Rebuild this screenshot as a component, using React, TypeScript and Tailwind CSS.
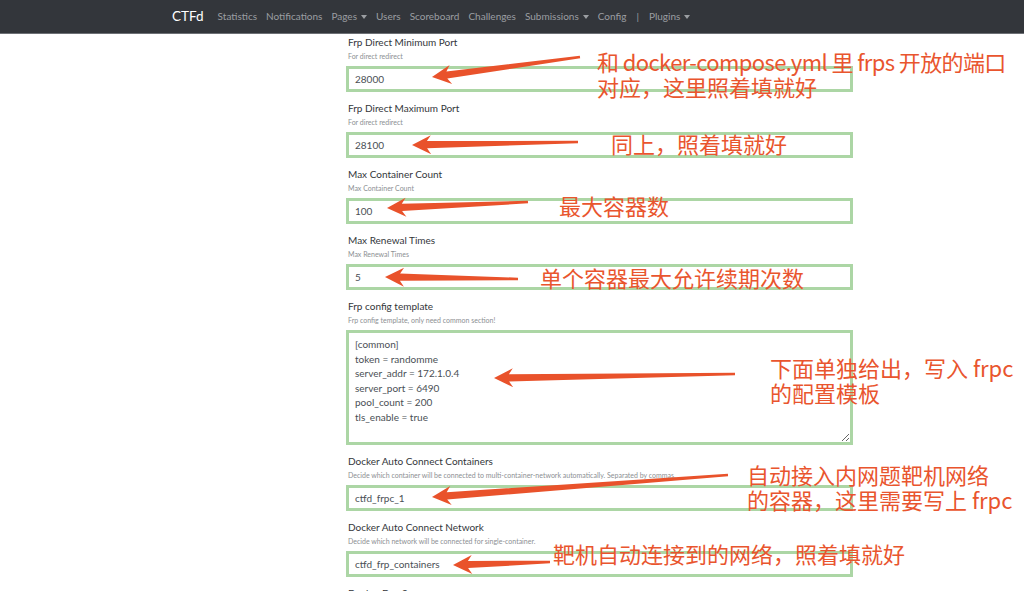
import { ReactNode } from 'react'

const navItems = [
  { label: 'Statistics' },
  { label: 'Notifications' },
  { label: 'Pages', caret: true },
  { label: 'Users' },
  { label: 'Scoreboard' },
  { label: 'Challenges' },
  { label: 'Submissions', caret: true },
  { label: 'Config' },
]

const fields = [
  { label: 'Frp Direct Minimum Port', help: 'For direct redirect', value: '28000' },
  { label: 'Frp Direct Maximum Port', help: 'For direct redirect', value: '28100' },
  { label: 'Max Container Count', help: 'Max Container Count', value: '100' },
  { label: 'Max Renewal Times', help: 'Max Renewal Times', value: '5' },
]

const template = `[common]
token = randomme
server_addr = 172.1.0.4
server_port = 6490
pool_count = 200
tls_enable = true

admin_addr = 172.1.0.3
admin_port = 7400`

const fields2 = [
  {
    label: 'Docker Auto Connect Containers',
    help: 'Decide which container will be connected to multi-container-network automatically. Separated by commas.',
    value: 'ctfd_frpc_1',
  },
  {
    label: 'Docker Auto Connect Network',
    help: 'Decide which network will be connected for single-container.',
    value: 'ctfd_frp_containers',
  },
  { label: 'Docker Dns Servers', help: 'Decide which dns will be used in container network.', value: '' },
]

// arrows: tail -> tip
const arrows: [number, number, number, number][] = [
  [580, 57, 432, 77],
  [578, 142, 412, 145],
  [528, 202, 387, 208],
  [518, 279, 385, 277],
  [735, 374, 494, 378],
  [728, 475, 432, 497],
  [550, 562, 453, 565],
]

const notes = [
  { x: 597, y: 49, lines: ['和 docker-compose.yml 里 frps 开放的端口', '对应，这里照着填就好'], tight: true },
  { x: 611, y: 131, lines: ['同上，照着填就好'] },
  { x: 559, y: 193, lines: ['最大容器数'] },
  { x: 540, y: 265, lines: ['单个容器最大允许续期次数'] },
  { x: 770, y: 355, lines: ['下面单独给出，写入 frpc', '的配置模板'] },
  { x: 747, y: 462, lines: ['自动接入内网题靶机网络', '的容器，这里需要写上 frpc'] },
  { x: 553, y: 541, lines: ['靶机自动连接到的网络，照着填就好'] },
]

function arrowPoints(tx: number, ty: number, hx: number, hy: number) {
  const len = Math.hypot(hx - tx, hy - ty)
  const dx = (hx - tx) / len
  const dy = (hy - ty) / len
  const nx = -dy
  const ny = dx
  const bx = hx - dx * 15
  const by = hy - dy * 15
  const wx = hx - dx * 19
  const wy = hy - dy * 19
  const pts = [
    [tx + nx * 1.3, ty + ny * 1.3],
    [bx + nx * 3.6, by + ny * 3.6],
    [wx + nx * 9.5, wy + ny * 9.5],
    [hx, hy],
    [wx - nx * 9.5, wy - ny * 9.5],
    [bx - nx * 3.6, by - ny * 3.6],
    [tx - nx * 1.3, ty - ny * 1.3],
  ]
  return pts.map((p) => p.map((v) => v.toFixed(1)).join(',')).join(' ')
}

function Caret() {
  return <span className="ml-[4px] inline-block border-x-[3px] border-t-[4px] border-x-transparent border-t-[#9b9ea2] align-middle" />
}

function Group({ label, help, children }: { label: string; help: string; children: ReactNode }) {
  return (
    <div className="mb-[9px]">
      <div className="h-[14px] pl-[2px] text-[10px] leading-[14px] text-[#33363a] whitespace-nowrap">{label}</div>
      <div className="mt-[2px] h-[10px] pl-[2px] text-[7px] leading-[10px] text-[#8c8f93] whitespace-nowrap">{help}</div>
      <div className="mt-[5px]">{children}</div>
    </div>
  )
}

export default function App() {
  return (
    <div className="relative h-screen overflow-hidden bg-white font-['Lato','Liberation_Sans',sans-serif]">
      {/* Navbar */}
      <nav className="h-[34px] bg-[#33363b] border-b border-[#6d7075] flex items-center pl-[172px]">
        <span className="text-[13.5px] text-white mr-[14px]">CTFd</span>
        <div className="flex items-center gap-[9px] text-[10px] text-[#9b9ea2]">
          {navItems.map((item) => (
            <span key={item.label} className="flex items-center">
              {item.label}
              {item.caret && <Caret />}
            </span>
          ))}
          <span className="mx-[1px]">|</span>
          <span className="flex items-center">
            Plugins
            <Caret />
          </span>
        </div>
      </nav>

      {/* Form */}
      <main className="ml-[346px] w-[507px] pt-[1px]">
        {fields.map((f) => (
          <Group key={f.label} label={f.label} help={f.help}>
            <div className="h-[26px] border-[3px] border-[#acd6a5] flex items-center px-[6px] text-[10px] text-[#4a4f55]">
              {f.value}
            </div>
          </Group>
        ))}
        <Group label="Frp config template" help="Frp config template, only need common section!">
          <textarea
            readOnly
            value={template}
            className="block w-full h-[115px] border-[3px] border-[#acd6a5] px-[6px] pt-[4px] text-[10px] leading-[14.6px] text-[#4a4f55] overflow-hidden resize-y outline-none font-['Lato','Liberation_Sans',sans-serif]"
          />
        </Group>
        {fields2.map((f) => (
          <Group key={f.label} label={f.label} help={f.help}>
            <div className="h-[26px] border-[3px] border-[#acd6a5] flex items-center px-[6px] text-[10px] text-[#4a4f55]">
              {f.value}
            </div>
          </Group>
        ))}
      </main>

      {/* Annotations */}
      <svg className="pointer-events-none absolute inset-0" width="1024" height="591">
        {arrows.map(([tx, ty, hx, hy], i) => (
          <polygon key={i} points={arrowPoints(tx, ty, hx, hy)} fill="#e9522b" />
        ))}
      </svg>
      {notes.map((n, i) => (
        <div
          key={i}
          className="pointer-events-none absolute whitespace-nowrap text-[22px] leading-[25px] text-[#e9552e] font-['Noto_Sans_CJK_SC','Noto_Sans',sans-serif]"
          style={{ left: n.x, top: n.y }}
        >
          {n.lines.map((l, j) => (
            <div key={l} className={n.tight && j === 0 ? 'tracking-[-0.6px]' : ''}>
              {l}
            </div>
          ))}
        </div>
      ))}
    </div>
  )
}
